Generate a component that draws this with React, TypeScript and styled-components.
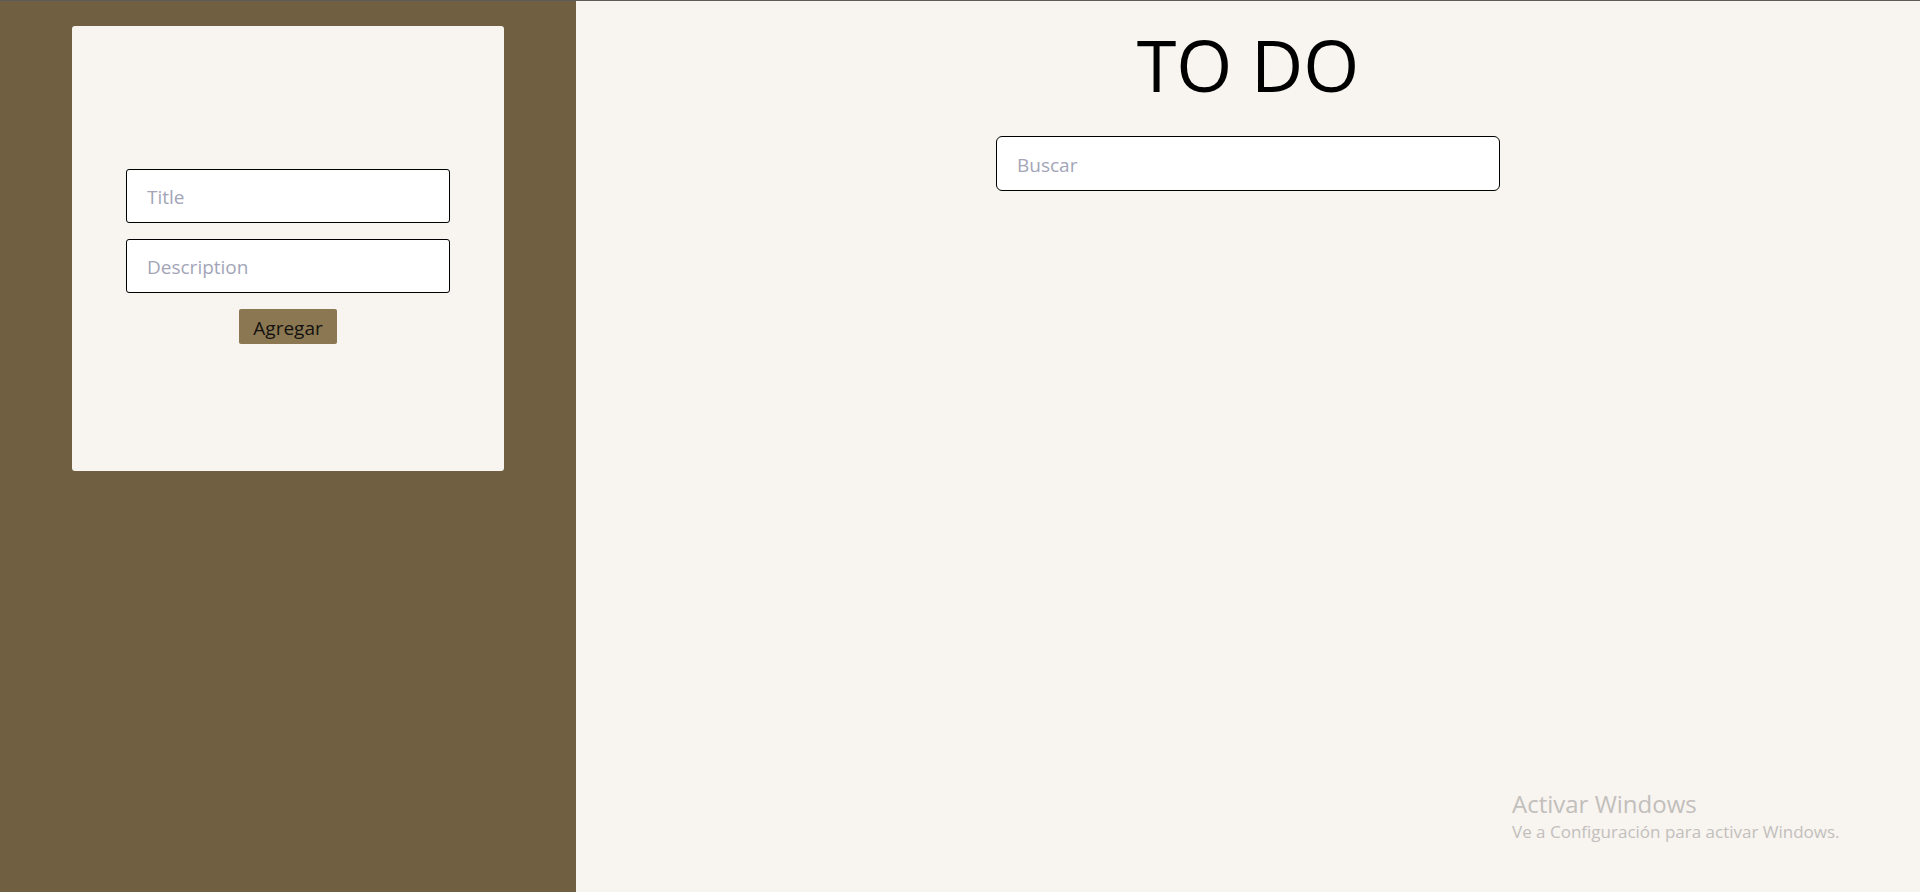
import React from "react";
import styled, { createGlobalStyle } from "styled-components";

const GlobalStyle = createGlobalStyle`
  html, body {
    margin: 0;
    padding: 0;
    height: 100%;
  }
  body {
    font-family: "Open Sans", "Noto Sans", sans-serif;
    background: #f8f4f0;
  }
  #root {
    height: 100%;
  }
  * {
    box-sizing: border-box;
  }
`;

const Page = styled.div`
  position: relative;
  height: 892px;
  border-top: 1px solid #5c5b58;
  display: grid;
  grid-template-columns: 30% 70%;
  overflow: hidden;
`;

const Sidebar = styled.aside`
  background: #705f40;
  padding-top: 25px;
  display: flex;
  justify-content: center;
  align-items: flex-start;
`;

const Card = styled.form`
  width: 75%;
  height: 445px;
  background: #f8f4f0;
  border-radius: 3px;
  padding-top: 143px;
  display: flex;
  flex-direction: column;
  align-items: center;
  gap: 16px;
`;

const Field = styled.input<{ $wide?: boolean }>`
  width: ${(p) => (p.$wide ? "504px" : "75%")};
  height: ${(p) => (p.$wide ? "55px" : "54px")};
  padding: 2px 20px 0;
  background: #ffffff;
  border: 1px solid #000;
  border-radius: ${(p) => (p.$wide ? "6px" : "3px")};
  font-family: "Open Sans", "Noto Sans", sans-serif;
  font-size: 19px;
  color: #111;
  outline: none;
  &::placeholder {
    color: #a3a5b7;
  }
`;

const AddButton = styled.button`
  height: 35px;
  padding: 3px 14px 0;
  background: #8b7852;
  color: #141210;
  border: none;
  border-radius: 2px;
  font-family: "Open Sans", "Noto Sans", sans-serif;
  font-size: 19px;
  line-height: 32px;
  cursor: pointer;
`;

const Main = styled.main`
  background: #f8f4f0;
  padding-top: 27px;
  display: flex;
  flex-direction: column;
  align-items: center;
`;

const Heading = styled.h1`
  margin: 0;
  font-family: "Open Sans", "Noto Sans", sans-serif;
  font-weight: 400;
  font-size: 72px;
  line-height: 72px;
  color: #000;
`;

const SearchRow = styled.div`
  margin-top: 36px;
  display: flex;
  justify-content: center;
  width: 100%;
`;

const Watermark = styled.div`
  position: absolute;
  left: 1512px;
  top: 787px;
  color: #c2bfbc;
  font-family: "Open Sans", "Noto Sans", sans-serif;
  pointer-events: none;
`;

const WatermarkTitle = styled.div`
  font-size: 24px;
  line-height: 32px;
`;

const WatermarkText = styled.div`
  font-size: 17px;
  line-height: 24px;
`;

export default function App() {
  return (
    <>
      <GlobalStyle />
      <Page>
        <Sidebar>
          <Card onSubmit={(e) => e.preventDefault()}>
            <Field placeholder="Title" />
            <Field placeholder="Description" />
            <AddButton type="submit">Agregar</AddButton>
          </Card>
        </Sidebar>
        <Main>
          <Heading>TO DO</Heading>
          <SearchRow>
            <Field $wide placeholder="Buscar" />
          </SearchRow>
        </Main>
        <Watermark>
          <WatermarkTitle>Activar Windows</WatermarkTitle>
          <WatermarkText>Ve a Configuración para activar Windows.</WatermarkText>
        </Watermark>
      </Page>
    </>
  );
}
